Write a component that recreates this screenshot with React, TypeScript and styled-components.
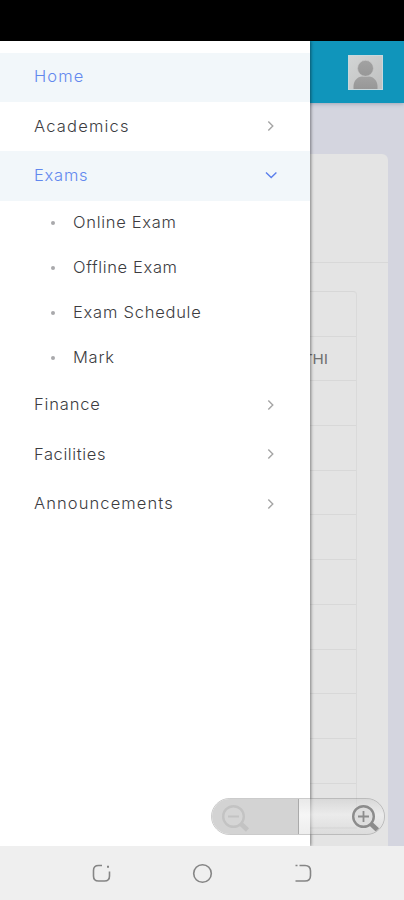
import React from "react";
import styled, { createGlobalStyle } from "styled-components";

const GlobalStyle = createGlobalStyle`
  * { box-sizing: border-box; }
  body { margin: 0; background: #efefef; font-family: Inter, "Liberation Sans", sans-serif; }
`;

const Phone = styled.div`
  width: 404px;
  height: 900px;
  display: flex;
  flex-direction: column;
  overflow: hidden;
`;

const StatusBar = styled.div`
  height: 41px;
  flex: none;
  background: #000;
`;

const Screen = styled.main`
  position: relative;
  height: 805px;
  flex: none;
  display: flex;
  flex-direction: column;
  overflow: hidden;
  background: #d4d5df;
`;

const Header = styled.header`
  height: 61.5px;
  flex: none;
  display: flex;
  justify-content: flex-end;
  padding: 13.5px 21.5px 0 0;
  background: #1095bb;
  box-shadow: 0 1px 4px rgba(60, 80, 110, 0.35);
`;

const Avatar = styled.svg`
  width: 35px;
  height: 35px;
`;

const Card = styled.section`
  height: 760px;
  flex: none;
  margin: 51.5px 16px 0;
  border-radius: 6px;
  background: #e4e4e4;
`;

const CardHeader = styled.div`
  height: 109px;
  border-bottom: 1px solid #d8d8d8;
`;

const Table = styled.div`
  margin: 28px 31px 0 16px;
  border: 1px solid #dadada;
  border-top-color: #d7d7d7;
  border-radius: 4px 4px 0 0;
`;

const TableRow = styled.div`
  height: 44.7px;
  display: flex;
  align-items: center;
  justify-content: flex-end;
  padding-right: 28px;
  border-bottom: 1px solid #d8d8d8;
  font: 15.5px "Liberation Sans", sans-serif;
  color: #707070;
`;

const Drawer = styled.aside`
  position: absolute;
  inset: 0 auto 0 0;
  width: 309.5px;
  padding-top: 11.5px;
  background: #fff;
  box-shadow: 1px 0 3px rgba(0, 0, 0, 0.45);
`;

const MenuItem = styled.a<{ $active?: boolean }>`
  height: 49.4px;
  display: flex;
  align-items: center;
  justify-content: space-between;
  padding: 0 32px 0 34px;
  background: ${(p) => (p.$active ? "#f2f7fa" : "transparent")};
  color: ${(p) => (p.$active ? "#6288ee" : "#3c3c3f")};
`;

const Label = styled.span<{ $spacing: number }>`
  font-size: 16.5px;
  font-weight: 300;
  line-height: 20px;
  padding-bottom: 2px;
  white-space: nowrap;
  letter-spacing: ${(p) => p.$spacing}px;
`;

const SubMenu = styled.div`
  padding-bottom: 0.5px;
`;

const SubItem = styled.a`
  height: 44.9px;
  display: flex;
  align-items: center;
  gap: 18px;
  padding-left: 51px;
  color: #3c3c3f;
`;

const Bullet = styled.i`
  width: 4px;
  height: 4px;
  border-radius: 50%;
  background: #a9a9ac;
`;

const Chevron = styled.svg`
  width: 14px;
  height: 14px;
  margin-bottom: 1px;
  fill: none;
  stroke-width: 1.4;
`;

const ZoomControl = styled.div`
  position: absolute;
  left: 211px;
  top: 757px;
  width: 174px;
  height: 37px;
  display: flex;
  border-radius: 19px;
  overflow: hidden;
  border: 1px solid rgba(125, 125, 125, 0.4);
`;

const ZoomHalf = styled.div<{ $muted?: boolean }>`
  flex: ${(p) => (p.$muted ? "0 0 87px" : "1")};
  display: flex;
  align-items: center;
  justify-content: ${(p) => (p.$muted ? "flex-start" : "flex-end")};
  padding: ${(p) => (p.$muted ? "0 0 0 8px" : "0 4px 0 0")};
  background: ${(p) =>
    p.$muted
      ? "#d3d3d3"
      : "linear-gradient(rgba(200,200,200,.4), rgba(240,240,240,.6) 45%, rgba(205,205,205,.35))"};
  border-right: ${(p) => (p.$muted ? "1px solid #aaa" : "0")};
`;

const Magnifier = styled.svg`
  width: 30px;
  height: 30px;
  fill: none;
`;

const NavBar = styled.nav`
  height: 54px;
  flex: none;
  display: flex;
  justify-content: center;
  align-items: center;
  gap: 79px;
  background: #efefef;
`;

const NavIcon = styled.svg`
  width: 22px;
  height: 22px;
  fill: none;
  stroke: #858585;
  stroke-width: 1.6;
`;

const subItems = [
  { text: "Online Exam", spacing: 0.7 },
  { text: "Offline Exam", spacing: 0.63 },
  { text: "Exam Schedule", spacing: 0.76 },
  { text: "Mark", spacing: 0.75 },
];

const laterItems = [
  { text: "Finance", spacing: 0.85 },
  { text: "Facilities", spacing: 0.6 },
  { text: "Announcements", spacing: 1.1 },
];

const tableRows = ["", "THI", "", "", "", "", "", "", "", "", "", ""];

function Arrow({ open = false }: { open?: boolean }) {
  return (
    <Chevron viewBox="0 0 14 14" stroke={open ? "#5b7fec" : "#a5a5a5"}>
      <path d={open ? "M2 4.5 7.2 9.5 12.4 4.5" : "M4.3 2.4 8.8 7 4.3 11.6"} />
    </Chevron>
  );
}

function Lens({ plus = false }: { plus?: boolean }) {
  return (
    <Magnifier viewBox="0 0 30 30" stroke={plus ? "#8c8c8c" : "#c3c3c3"}>
      <path d="m20 21 7.500 7" strokeWidth="4.5" />
      <circle cx="13.500" cy="14.500" r="10.3" strokeWidth="2.4" fill={plus ? "#dedede" : "#d5d5d5"} />
      <path d={plus ? "M8 14.5h11M13.5 9v11" : "M8 14.5h11"} strokeWidth="1.8" />
    </Magnifier>
  );
}

export default function App() {
  return (
    <Phone>
      <GlobalStyle />
      <StatusBar />
      <Screen>
        <Header>
          <Avatar viewBox="0 0 35 35">
            <defs>
              <linearGradient id="photo" x1="0" y1="0" x2="1" y2="1">
                <stop stopColor="#d3d5d5" />
                <stop offset="1" stopColor="#bfc0c0" />
              </linearGradient>
              <linearGradient id="person" x1="0" y1="0" x2="0" y2="1">
                <stop stopColor="#a2a2a2" />
                <stop offset="1" stopColor="#979797" />
              </linearGradient>
            </defs>
            <rect x="0.5" y="0.5" width="34" height="34" fill="url(#photo)" stroke="#c9d8dc" />
            <path d="M5.500 34v-3c0-5 4-9.500 8.500-9.500h7c4.500 0 8.500 4.500 8.500 9.500v3z" fill="url(#person)" />
            <circle cx="17.500" cy="13.300" r="8" fill="url(#person)" stroke="#c9c9c9" strokeWidth="0.700" />
          </Avatar>
        </Header>
        <Card>
          <CardHeader />
          <Table>
            {tableRows.map((value, i) => (
              <TableRow key={i}>{value}</TableRow>
            ))}
          </Table>
        </Card>
        <Drawer>
          <MenuItem $active>
            <Label $spacing={1.1}>Home</Label>
          </MenuItem>
          <MenuItem>
            <Label $spacing={1.2}>Academics</Label>
            <Arrow />
          </MenuItem>
          <MenuItem $active>
            <Label $spacing={0.75}>Exams</Label>
            <Arrow open />
          </MenuItem>
          <SubMenu>
            {subItems.map((item) => (
              <SubItem key={item.text}>
                <Bullet />
                <Label $spacing={item.spacing}>{item.text}</Label>
              </SubItem>
            ))}
          </SubMenu>
          {laterItems.map((item) => (
            <MenuItem key={item.text}>
              <Label $spacing={item.spacing}>{item.text}</Label>
              <Arrow />
            </MenuItem>
          ))}
        </Drawer>
        <ZoomControl>
          <ZoomHalf $muted>
            <Lens />
          </ZoomHalf>
          <ZoomHalf>
            <Lens plus />
          </ZoomHalf>
        </ZoomControl>
      </Screen>
      <NavBar>
        <NavIcon viewBox="0 0 22 22">
          <path d="M12 3.500H8.500Q3.500 3.500 3.500 8.500v5.500Q3.500 19 8.500 19h6q5 0 5-5V9.500" />
          <path d="M17 4.800h2" strokeWidth="2" />
        </NavIcon>
        <NavIcon viewBox="0 0 22 22">
          <circle cx="11.500" cy="11.500" r="8.800" />
        </NavIcon>
        <NavIcon viewBox="0 0 22 22">
          <path d="M3.500 3.500h2M7.500 3.500H13Q18.500 3.500 18.500 9V13.500Q18.500 19 13 19H3.500" />
        </NavIcon>
      </NavBar>
    </Phone>
  );
}
